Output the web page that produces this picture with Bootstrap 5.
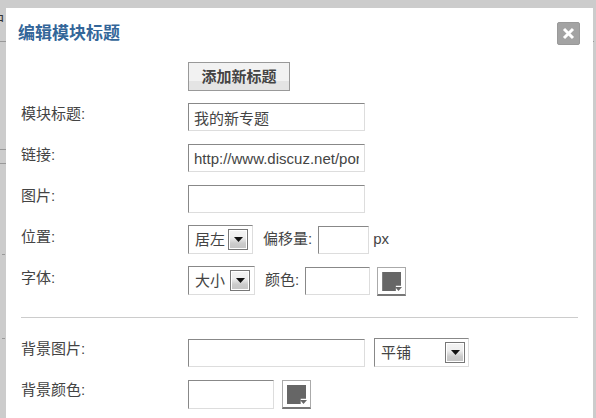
<!DOCTYPE html>
<html lang="zh">
<head>
<meta charset="utf-8">
<title>编辑模块标题</title>
<link href="https://cdn.jsdelivr.net/npm/bootstrap@5.3.0/dist/css/bootstrap.min.css" rel="stylesheet">
<style>
html,body{height:418px;overflow:hidden}
body{background-color:#ccc;font:15px/20px "Liberation Sans","Noto Sans CJK SC",sans-serif;color:#444;
 background-image:linear-gradient(#999,#999),linear-gradient(#999,#999),linear-gradient(#999,#999),linear-gradient(#999,#999),linear-gradient(#999,#999),linear-gradient(#999,#999);
 background-repeat:no-repeat;
 background-size:6px 1px,6px 1px,6px 1px,3px 1px,3px 1px,1px 1px;
 background-position:0 41px,0 149px,0 163px,2px 254px,2px 338px,593px 41px}
.shell{height:418px;padding-top:8px}
.gutter-l{width:6px;overflow:hidden;flex:none}
.gutter-l span{display:block;margin:2px 0 0 -9px;color:#333;width:16px;font-size:14px}
.gutter-r{width:3px;flex:none}
.dlg{flex:1 1 auto;background:#fff;border:0;border-radius:0;padding:0 15px;min-width:0}
.dlg-head{height:54px;margin-right:-2px}
.dlg-title{font-size:17px;font-weight:700;color:#369;margin:0 0 0 -3px;line-height:20px}
.dlg-close{width:23px;height:23px;margin-top:14px;background:#a3a3a3;border:1px solid #999;border-radius:2px;padding:0}
.dlg-close svg{display:block;margin:auto}
.f-row{display:flex;align-items:flex-start}
.f-lab{width:167px;flex:none;padding-top:1px;color:#444;line-height:20px}
.f-lab2{padding-top:2px}
.f-lab0{padding-top:0}
.f-in{border:1px solid #ddd;border-top-color:#888;border-left-color:#888;border-radius:0;height:28px;padding:3px 5px;font-size:15px;line-height:20px;color:#444;background:#fff;box-shadow:none}
.w177{width:177px}.w51{width:51px}.w65{width:65px}.w86{width:86px;height:29px}
.nudge{margin-top:1px}
.f-sel{display:flex;align-items:center;justify-content:space-between;height:29px;border:1px solid #ddd;border-top-color:#888;border-left-color:#888;background:#fff;padding:0 4px 0 6px;color:#444}
.sel-65{width:65px}.sel-67{width:67px}
.sel-95{width:95px;margin:-1px 0 0 9px;padding-right:3px}
.sel-btn{width:20px;height:21px;border:1px solid #777;background:linear-gradient(#f4f4f4,#eee 40%,#ccc 70%,#c4c4c4);display:flex;align-items:center;justify-content:center;box-shadow:inset 0 0 0 1px #fff}
.swatch{width:29px;height:29px;border:1px solid #aaa;border-bottom:2px solid #777;background:#fff;padding:4px;position:relative;flex:none;margin-left:7px}
.swatch-fill{display:block;width:19px;height:19px;background:#666;clip-path:polygon(0 0,100% 0,100% 72%,72% 72%,72% 100%,0 100%)}
.swatch svg{position:absolute;right:3px;bottom:3px}
.swatch-b{margin-left:8px}
.addbtn{width:102px;height:29px;padding:0;font-size:15px;line-height:26px;font-weight:700;color:#444;border:1px solid #999;border-radius:0;background:linear-gradient(#f2f2f2,#f2f2f2 65%,#e4e4e4 66%,#e4e4e4)}
.divide{margin:21px 15px 21px 0;border:0;border-top:1px solid #ccc;opacity:1}
.mt-a{margin-top:13px}.mt-b{margin-top:12px}
.lbl-in{margin:0 6px 0 10px;padding-top:4px}
.unit{margin-left:4px;padding-top:4px}
</style>
</head>
<body>
<div class="shell d-flex">
  <div class="gutter-l"><span>户</span></div>
  <div class="card dlg">
    <div class="dlg-head d-flex justify-content-between align-items-start">
      <h5 class="dlg-title pt-3">编辑模块标题</h5>
      <button type="button" class="dlg-close" aria-label="关闭"><svg width="13" height="13" viewBox="0 0 13 13"><path d="M2 2 11 11M11 2 2 11" stroke="#fff" stroke-width="3"/></svg></button>
    </div>
    <div class="f-row"><div class="f-lab"></div><button type="button" class="btn addbtn">添加新标题</button></div>
    <div class="f-row mt-b"><div class="f-lab">模块标题:</div><input class="form-control f-in w177" value="我的新专题"></div>
    <div class="f-row mt-a"><div class="f-lab">链接:</div><input class="form-control f-in w177" value="http://www.discuz.net/portal"></div>
    <div class="f-row mt-a"><div class="f-lab">图片:</div><input class="form-control f-in w177"></div>
    <div class="f-row mt-b"><div class="f-lab f-lab2">位置:</div>
      <div class="f-sel sel-65"><span>居左</span><span class="sel-btn"><svg width="9" height="5" viewBox="0 0 9 5"><path d="M0 0H9L4.500 5Z" fill="#111"/></svg></span></div>
      <span class="lbl-in">偏移量:</span><input class="form-control f-in w51 nudge"><span class="unit">px</span>
    </div>
    <div class="f-row mt-b"><div class="f-lab f-lab2">字体:</div>
      <div class="f-sel sel-67"><span>大小</span><span class="sel-btn"><svg width="9" height="5" viewBox="0 0 9 5"><path d="M0 0H9L4.500 5Z" fill="#111"/></svg></span></div>
      <span class="lbl-in">颜色:</span><input class="form-control f-in w65 nudge"><span class="swatch nudge"><span class="swatch-fill"></span><svg width="7" height="4" viewBox="0 0 7 4"><path d="M0 0H7L3.500 4Z" fill="#666"/></svg></span>
    </div>
    <hr class="divide">
    <div class="f-row"><div class="f-lab f-lab0">背景图片:</div><input class="form-control f-in w177"><div class="f-sel sel-95"><span>平铺</span><span class="sel-btn"><svg width="9" height="5" viewBox="0 0 9 5"><path d="M0 0H9L4.500 5Z" fill="#111"/></svg></span></div></div>
    <div class="f-row mt-a"><div class="f-lab f-lab0">背景颜色:</div><input class="form-control f-in w86"><span class="swatch swatch-b"><span class="swatch-fill"></span><svg width="7" height="4" viewBox="0 0 7 4"><path d="M0 0H7L3.500 4Z" fill="#666"/></svg></span></div>
  </div>
  <div class="gutter-r"></div>
</div>
<script src="https://cdn.jsdelivr.net/npm/bootstrap@5.3.0/dist/js/bootstrap.bundle.min.js"></script>
</body>
</html>
